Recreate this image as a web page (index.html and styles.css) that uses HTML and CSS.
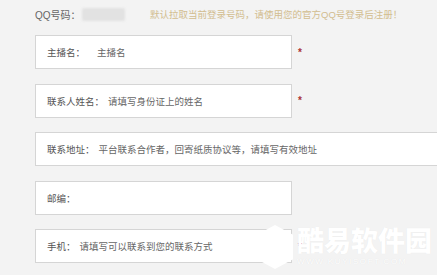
FILE: index.html
```html
<!DOCTYPE html>
<html lang="zh-CN">
<head>
<meta charset="utf-8">
<link rel="stylesheet" href="styles.css">
</head>
<body>
<div class="page">
  <div class="head">
    <span class="qq-label">QQ号码：</span>
    <span class="qq-mask"></span>
    <span class="qq-tip">默认拉取当前登录号码，请使用您的官方QQ号登录后注册！</span>
  </div>
  <div class="form">
    <div class="row">
      <div class="field"><span class="label">主播名：</span><span class="value value-wide">主播名</span></div>
      <span class="req">*</span>
    </div>
    <div class="row">
      <div class="field"><span class="label">联系人姓名：</span><span class="value">请填写身份证上的姓名</span></div>
      <span class="req">*</span>
    </div>
    <div class="row">
      <div class="field field-long"><span class="label">联系地址：</span><span class="value">平台联系合作者，回寄纸质协议等，请填写有效地址</span></div>
    </div>
    <div class="row">
      <div class="field"><span class="label">邮编：</span></div>
    </div>
    <div class="row">
      <div class="field"><span class="label">手机：</span><span class="value">请填写可以联系到您的联系方式</span></div>
      <span class="req">*</span>
    </div>
  </div>
  <div class="watermark">
    <div class="wm-logo"></div>
    <div class="wm-text">
      <div class="wm-name">酷易软件园</div>
      <div class="wm-url">WWW.KUYISOFT.COM</div>
    </div>
  </div>
</div>
</body>
</html>
```

FILE: styles.css
```css
* { box-sizing: border-box; }
html, body {
  margin: 0;
  padding: 0;
  width: 437px;
  height: 275px;
  overflow: hidden;
  background: #f3f3f3;
}
body {
  font-family: "Liberation Sans", "Noto Sans CJK SC", sans-serif;
  font-size: 9.5px;
  color: #555;
}
.page {
  position: relative;
  width: 437px;
  height: 275px;
  padding-left: 35px;
}
.head {
  height: 35px;
  display: flex;
  align-items: center;
  padding-bottom: 7px;
}
.qq-label {
  color: #666;
  font-size: 10px;
  width: 47px;
}
.qq-mask {
  width: 43px;
  height: 13px;
  background: #e2e2e2;
  border-radius: 2px;
  filter: blur(1px);
}
.qq-tip {
  margin-left: 25px;
  color: #d2bd8f;
  white-space: nowrap;
}
.form {
  display: flex;
  flex-direction: column;
  gap: 14.5px;
}
.row {
  display: flex;
  align-items: center;
  height: 34px;
}
.field {
  width: 257px;
  height: 34px;
  background: #fff;
  border: 1px solid #d5d5d5;
  display: flex;
  align-items: center;
  padding-left: 11px;
  white-space: nowrap;
  flex-shrink: 0;
}
.field-long { width: 420px; }
.label { color: #555; }
.value { margin-left: 4px; color: #666; }
.value-wide { margin-left: 12px; }
.req {
  margin-left: 6px;
  color: #a33;
  font-size: 10px;
  font-weight: bold;
}
.watermark {
  position: absolute;
  left: 257px;
  top: 225px;
  display: flex;
  align-items: flex-start;
}
.wm-logo {
  width: 36px;
  height: 44px;
  background: #fff;
  clip-path: polygon(50% 0, 100% 22%, 100% 78%, 50% 100%, 0 78%, 0 22%);
}
.wm-text {
  margin-left: 4px;
  display: flex;
  flex-direction: column;
  align-items: flex-start;
}
.wm-name {
  font-family: "Noto Sans CJK SC", sans-serif;
  font-weight: 900;
  font-size: 27px;
  line-height: 29px;
  color: #fff;
  text-shadow: 0 0 1px rgba(0,0,0,0.06);
}
.wm-url {
  margin-top: 3px;
  font-family: "Liberation Sans", sans-serif;
  font-size: 8px;
  line-height: 10px;
  color: #fff;
  letter-spacing: 1.6px;
  text-shadow: 0 0 1px rgba(0,0,0,0.1);
}
```
